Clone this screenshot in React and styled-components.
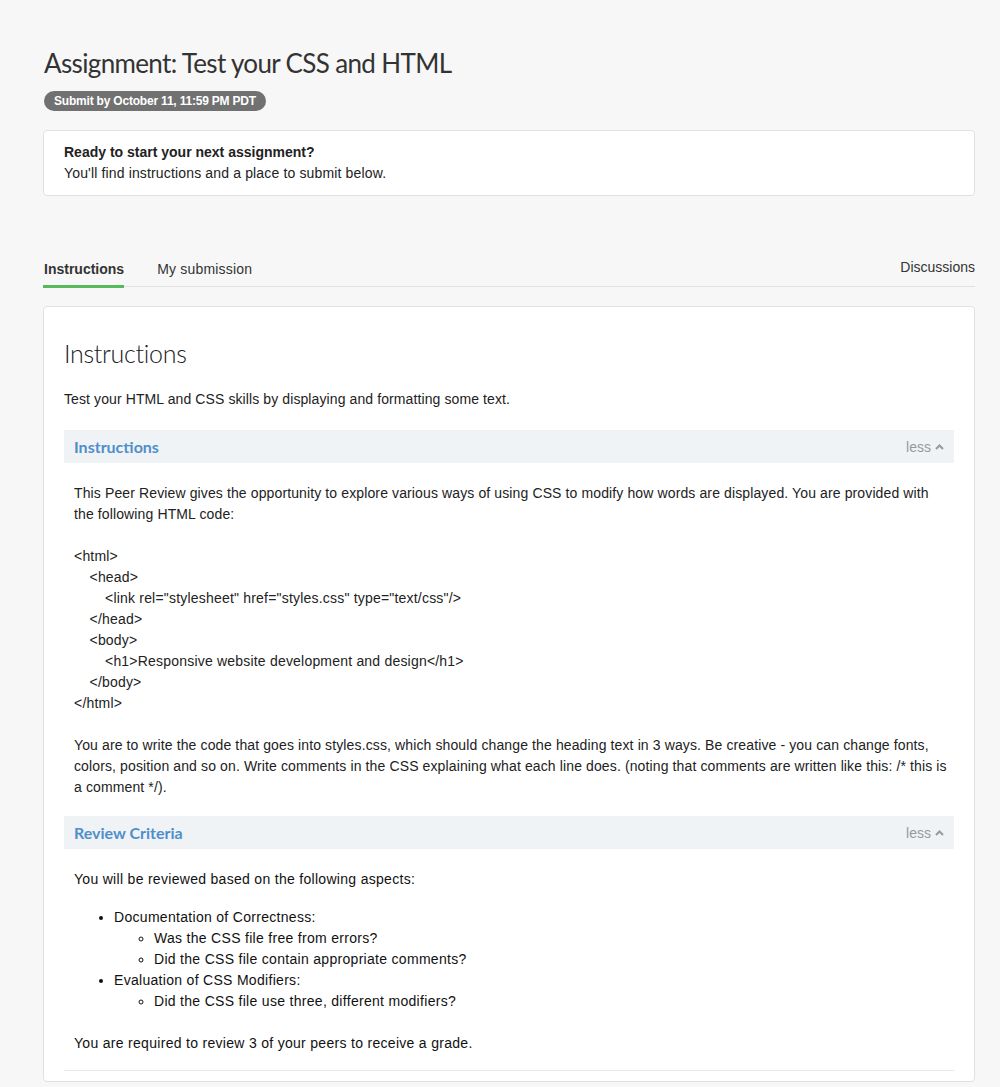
import React from 'react'
import styled, { createGlobalStyle } from "styled-components"

const Global = createGlobalStyle`
body {
  margin: 0;
  background: #f7f7f7;
  font-family: "Liberation Sans", Arial, sans-serif;
  color: #333;
}
`

const Page = styled.div`
padding: 45px 25px 6px 43px;
`

const Title = styled.h1`
margin: 0 0 0 1px;
font-family: Lato, "Noto Sans", sans-serif;
font-weight: 400;
font-size: 26px;
letter-spacing: -0.65px;
line-height: 36px;
color: #333;
`

const Badge = styled.div`
display: inline-block;
margin: 10px 0 0 1px;
padding: 0 10px;
height: 20px;
line-height: 20px;
border-radius: 10px;
background: #717171;
color: #fff;
font-size: 12px;
font-weight: 700;
letter-spacing: -0.2px;
`

const Notice = styled.div`
margin-top: 19px;
background: #fff;
border: 1px solid #e1e1e1;
border-radius: 4px;
padding: 11px 20px;
font-size: 14px;
letter-spacing: 0.15px;
line-height: 21px;
color: #222;
`

const NoticeTitle = styled.div`
font-weight: 700;
letter-spacing: 0;
`

const Tabs = styled.div`
margin-top: 61px;
display: flex;
align-items: flex-end;
border-bottom: 1px solid #e1e1e1;
`

const Tab = styled.div`
margin-right: 32px;
padding: 0 0 6px 1px;
font-size: 14px;
line-height: 20px;
font-weight: ${({ active }) => (active ? 700 : 400)};
letter-spacing: ${({ active }) => (active ? 0 : 0.2)}px;
color: #333;
border-bottom: 3px solid ${({ active }) => (active ? "#58b85c" : "transparent")};
margin-bottom: -2px;
`

const TabRight = styled.div`
margin-left: auto;
padding-bottom: 9px;
font-size: 14px;
line-height: 20px;
color: #333;
`

const Card = styled.div`
margin-top: 19px;
background: #fff;
border: 1px solid #e1e1e1;
border-radius: 4px;
padding: 26px 20px 10px;
`

const CardHeading = styled.h2`
margin: 0;
font-family: Lato, "Noto Sans", sans-serif;
font-weight: 300;
font-size: 25px;
letter-spacing: -0.3px;
line-height: 40px;
color: #222;
`

const Lead = styled.p`
margin: 16px 0 20px;
font-size: 14px;
letter-spacing: 0.1px;
line-height: 21px;
color: #222;
`

const SectionBar = styled.div`
display: flex;
align-items: center;
justify-content: space-between;
height: 33px;
padding: 0 10px;
background: #f0f3f6;
`

const SectionTitle = styled.div`
font-family: Lato, "Noto Sans", sans-serif;
font-weight: 700;
font-size: 16px;
color: #4f8fc9;
`

const Less = styled.div`
display: flex;
align-items: center;
gap: 4px;
font-size: 14px;
color: #999;
`

const SectionBody = styled.div`
padding: 20px 6px ${({ dark }) => (dark ? 16 : 18)}px 10px;
font-size: 14px;
letter-spacing: ${({ dark }) => (dark ? 0.3 : 0.12)}px;
line-height: 21px;
color: ${({ dark }) => (dark ? "#111" : "#222")};
`

const Para = styled.p`
margin: 0 0 ${({ tight }) => (tight ? 17 : 21)}px;
&:last-child { margin-bottom: 0; }
`

const CodeLine = styled.div`
padding-left: ${({ level }) => level * 15.5}px;
letter-spacing: 0.2px;
`

const List = styled.ul`
margin: 0 0 21px;
padding-left: 40px;
list-style: disc;
ul {
  margin: 0;
  list-style: circle;
}
`

const Divider = styled.div`
border-top: 1px solid #e8e8e8;
`

const Chevron = () => (
  <svg width="9" height="6" viewBox="0 0 9 6">
    <path d="M1 5 L4.5 1.5 L8 5" fill="none" stroke="#999" strokeWidth="2" />
  </svg>
)

const Section = ({ title, children }) => (
  <>
    <SectionBar>
      <SectionTitle>{title}</SectionTitle>
      <Less>less <Chevron /></Less>
    </SectionBar>
    {children}
  </>
)

const code = [
  [0, "<html>"],
  [1, "<head>"],
  [2, '<link rel="stylesheet" href="styles.css" type="text/css"/>'],
  [1, "</head>"],
  [1, "<body>"],
  [2, "<h1>Responsive website development and design</h1>"],
  [1, "</body>"],
  [0, "</html>"],
]

export default function App() {
  return (
    <Page>
      <Global />
      <Title>Assignment: Test your CSS and HTML</Title>
      <Badge>Submit by October 11, 11:59 PM PDT</Badge>
      <Notice>
        <NoticeTitle>Ready to start your next assignment?</NoticeTitle>
        <div>You'll find instructions and a place to submit below.</div>
      </Notice>

      <Tabs>
        <Tab active>Instructions</Tab>
        <Tab>My submission</Tab>
        <TabRight>Discussions</TabRight>
      </Tabs>

      <Card>
        <CardHeading>Instructions</CardHeading>
        <Lead>Test your HTML and CSS skills by displaying and formatting some text.</Lead>

        <Section title="Instructions">
          <SectionBody>
            <Para>
              This Peer Review gives the opportunity to explore various ways of using CSS to modify how words are displayed. You are provided with the following HTML code:
            </Para>
            <Para>
              {code.map(([level, text], i) => (
                <CodeLine key={i} level={level}>{text}</CodeLine>
              ))}
            </Para>
            <Para>
              You are to write the code that goes into styles.css, which should change the heading text in 3 ways. Be creative - you can change fonts, colors, position and so on. Write comments in the CSS explaining what each line does. (noting that comments are written like this: /* this is a comment */).
            </Para>
          </SectionBody>
        </Section>

        <Section title="Review Criteria">
          <SectionBody dark>
            <Para tight>You will be reviewed based on the following aspects:</Para>
            <List>
              <li>
                Documentation of Correctness:
                <ul>
                  <li>Was the CSS file free from errors?</li>
                  <li>Did the CSS file contain appropriate comments?</li>
                </ul>
              </li>
              <li>
                Evaluation of CSS Modifiers:
                <ul>
                  <li>Did the CSS file use three, different modifiers?</li>
                </ul>
              </li>
            </List>
            <Para>You are required to review 3 of your peers to receive a grade.</Para>
          </SectionBody>
        </Section>
        <Divider />
      </Card>
    </Page>
  )
}
